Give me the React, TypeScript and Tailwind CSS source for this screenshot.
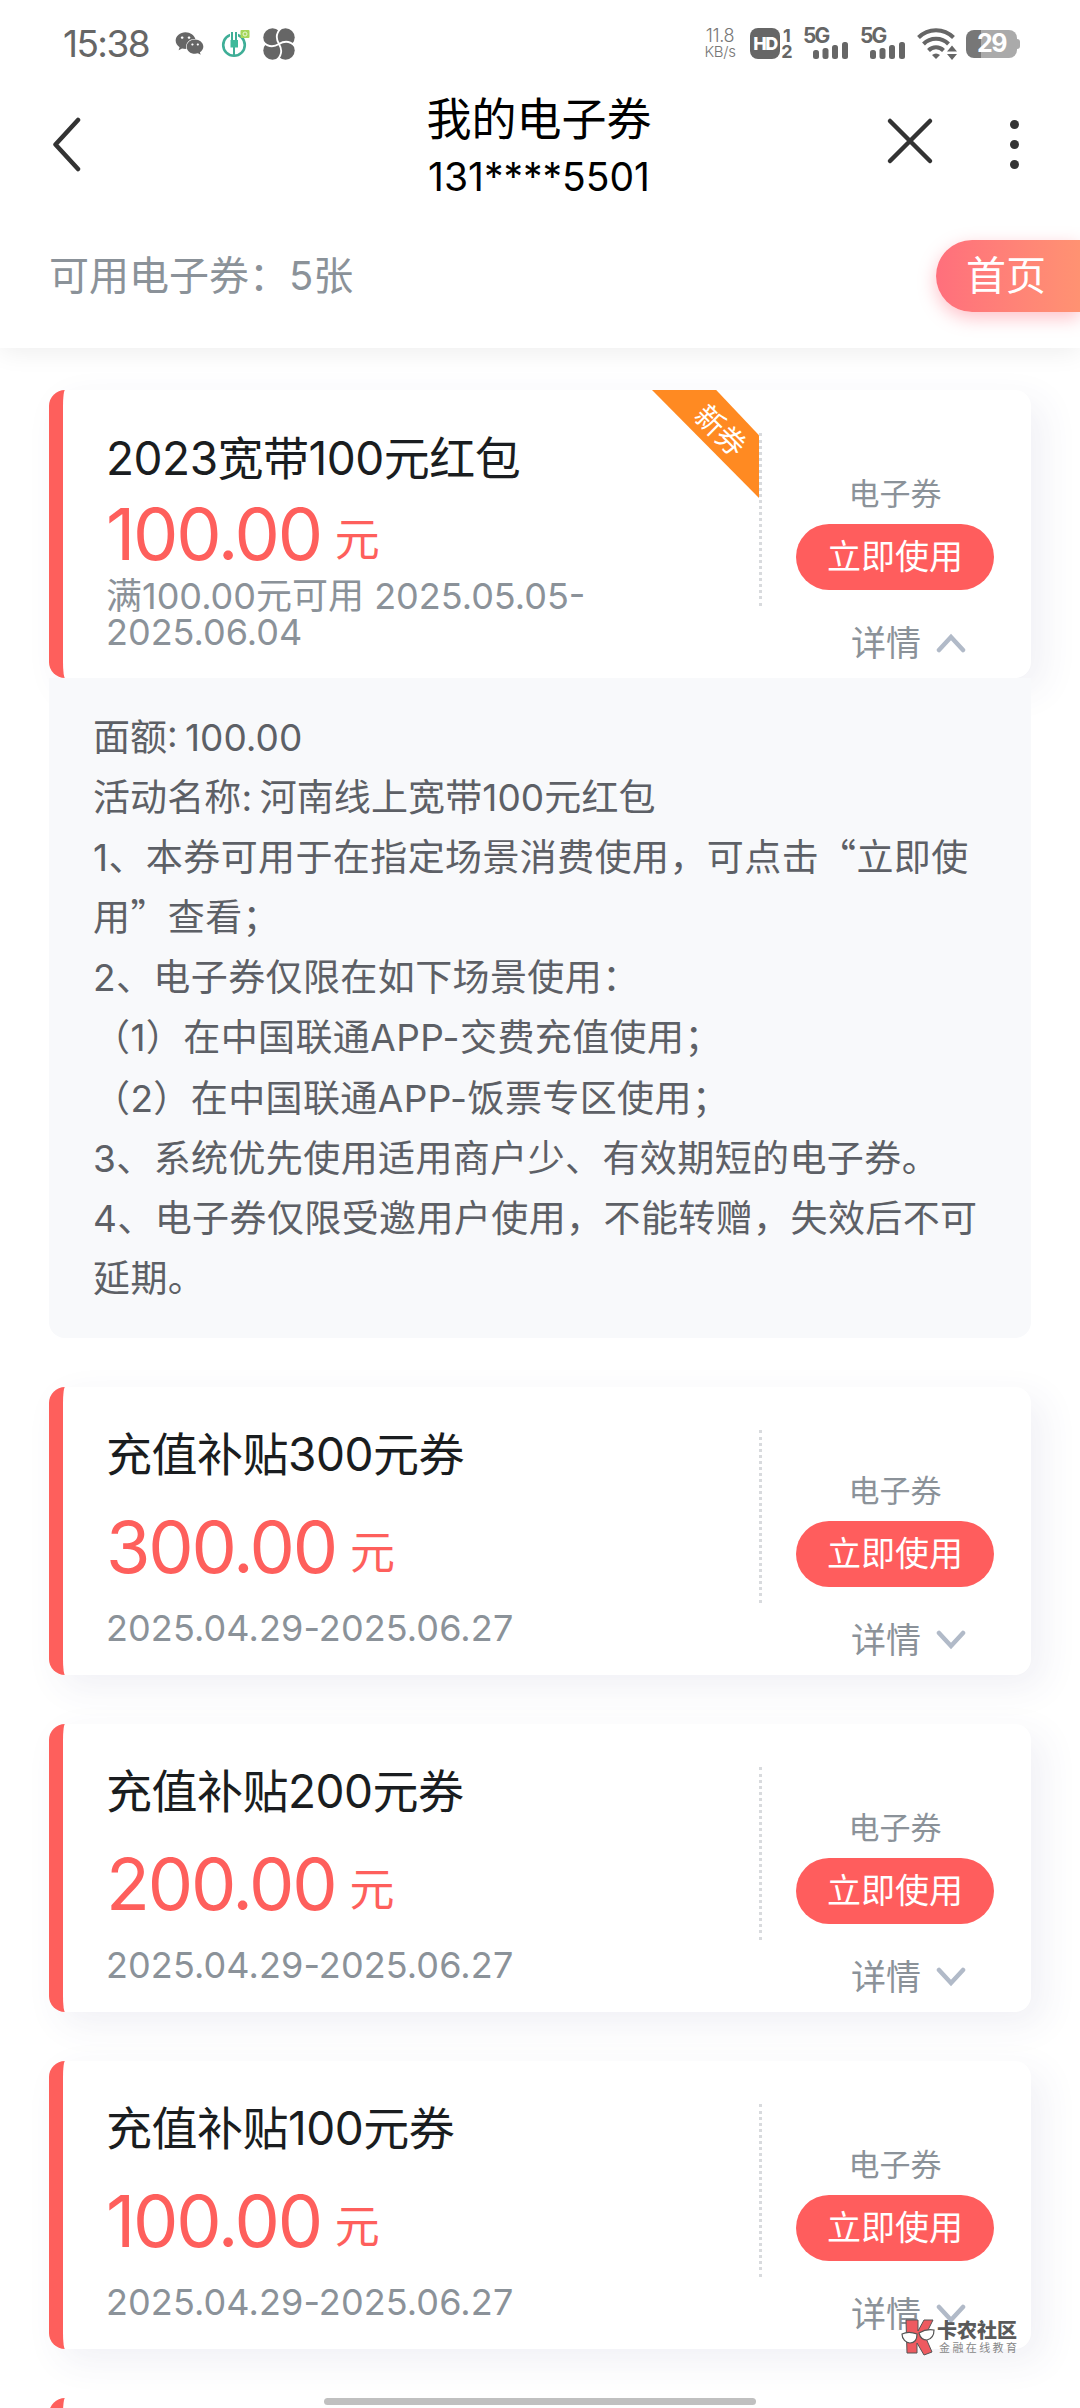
import React, { useState } from 'react';
import { FaWeixin } from 'react-icons/fa';

type Coupon = {
  id: number;
  title: string;
  amount: string;
  desc: string[];
  isNew?: boolean;
};

const coupons: Coupon[] = [
  { id: 1, title: '2023宽带100元红包', amount: '100.00', desc: ['满100.00元可用 2025.05.05-', '2025.06.04'], isNew: true },
  { id: 2, title: '充值补贴300元券', amount: '300.00', desc: ['2025.04.29-2025.06.27'] },
  { id: 3, title: '充值补贴200元券', amount: '200.00', desc: ['2025.04.29-2025.06.27'] },
  { id: 4, title: '充值补贴100元券', amount: '100.00', desc: ['2025.04.29-2025.06.27'] },
];

const Quote = ({ children }: { children: string }) => (
  <span lang="zh-CN" className="leading-none font-['Noto_Sans_CJK_SC',sans-serif]">{children}</span>
);

const SignalBars = () => (
  <div className="relative w-[46px] h-[32px]">
    <span className="absolute left-[-1px] -top-[1px] text-[21px] leading-[18px] font-bold tracking-[-2px]">5G</span>
    <svg className="absolute left-[9px] top-[14px]" width="36" height="17" viewBox="0 0 36 17" fill="currentColor">
      <rect x="0" y="8" width="6" height="9" rx="2.5" />
      <rect x="9.5" y="6" width="6" height="11" rx="2.5" />
      <rect x="19" y="3" width="6" height="14" rx="2.5" />
      <rect x="29" y="0" width="6" height="17" rx="2.5" />
    </svg>
  </div>
);

const StatusBar = () => (
  <div className="flex items-center h-[87px] pl-[63px] pr-[60px] text-[#666]">
    <span className="w-[112px] text-[37px] leading-none tracking-[-1.600px]">15:38</span>
    <FaWeixin size={29} />
    <svg className="ml-[17px]" width="30" height="30" viewBox="0 0 30 30">
      <circle cx="13" cy="16" r="10.8" fill="none" stroke="#3fae97" strokeWidth="2.6" />
      <path d="M13 2v10" stroke="#fff" strokeWidth="8" />
      <path d="M11 3v9M15 3v9M13 18v9" stroke="#3fae97" strokeWidth="2" fill="none" />
      <path d="M9.5 11h7.5v7.5H9.5z" fill="#3fb99a" />
      <rect x="19.5" y="1" width="9" height="8" rx="1" fill="#a5d65a" />
      <circle cx="24" cy="5" r="2" fill="none" stroke="#e9f8d5" strokeWidth="1" />
    </svg>
    <svg className="ml-[12px]" width="32" height="32" viewBox="0 0 32 32" fill="currentColor">
      <circle cx="9.5" cy="9.5" r="9.2" />
      <circle cx="22.5" cy="9.5" r="9.2" />
      <circle cx="9.5" cy="22.5" r="9.2" />
      <circle cx="22.5" cy="22.5" r="9.2" />
      <path d="M10 10h12v12H10z" />
      <path d="M18 0c-5 5-5 11-2 16M32 18c-5-5-11-5-16-2M14 32c5-5 5-11 2-16M0 14c5 5 11 5 16 2" stroke="#fff" strokeWidth="1.8" fill="none" />
    </svg>

    <div className="ml-auto flex items-center">
      <div className="w-[36px] flex flex-col items-center text-[#777] whitespace-nowrap">
        <div className="text-[18px] leading-[17px] font-light tracking-[-0.300px]">11.8</div>
        <div className="text-[15px] leading-[16px] font-light tracking-[-0.300px]">KB/s</div>
      </div>
      <div className="ml-[12px] w-[30px] h-[31px] rounded-[8px] bg-[#666] text-white text-[18px] font-extrabold tracking-[-1.500px] flex items-center justify-center">HD</div>
      <div className="ml-[1px] w-[12px] text-[18px] leading-[16px] font-bold text-center">
        <div>1</div>
        <div>2</div>
      </div>
      <div className="ml-[11px]"><SignalBars /></div>
      <div className="ml-[11px]"><SignalBars /></div>
      <svg className="ml-[10px]" width="40" height="32" viewBox="0 0 40 32" fill="none" stroke="currentColor" strokeWidth="4">
        <path d="M1.500 9.500a24.500 24.500 0 0 1 35 0" />
        <path d="M6.500 16a17.500 17.500 0 0 1 25 0" />
        <path d="M11.500 22.500a10.500 10.500 0 0 1 15 0" />
        <path d="M15 27a6 6 0 0 1 8 0l-4 4z" fill="currentColor" stroke="none" />
        <path d="M28 24.500l7-9 7 9z" fill="#fff" stroke="none" />
        <path d="M30 23.500l5-6 5 6zM30 26l5 6 5-6z" fill="currentColor" stroke="none" />
      </svg>
      <div className="ml-[9px] flex items-center">
        <div className="w-[51px] h-[28px] rounded-[8px] bg-[linear-gradient(90deg,#777_29%,#aaa_29%)] text-white text-[25px] font-bold leading-none tracking-[-1.500px] flex items-center justify-center">29</div>
        <div className="w-[3px] h-[10px] rounded-r-full bg-[#aaa]" />
      </div>
    </div>
  </div>
);

const NavBar = () => (
  <div className="flex items-center h-[115px] pl-[52px] pr-[61px] text-black">
    <svg width="60" height="56" viewBox="0 0 60 56" fill="none" stroke="#333" strokeWidth="4.500" strokeLinecap="round" strokeLinejoin="round">
      <path d="M26 3L3.500 27.500L26 52" />
    </svg>
    <div className="flex-1 pl-[80px] pt-[4px] flex flex-col items-center">
      <h1 className="text-[45px] leading-[60px]">我的电子券</h1>
      <p className="text-[39px] leading-[54px]">131****5501</p>
    </div>
    <svg className="mb-[7px]" width="48" height="48" viewBox="0 0 48 48" fill="none" stroke="#333" strokeWidth="4.500" strokeLinecap="round">
      <path d="M4 4l40 40M44 4L4 44" />
    </svg>
    <div className="ml-[76px] flex flex-col gap-[11px]">
      <span className="size-[9px] rounded-full bg-[#333]" />
      <span className="size-[9px] rounded-full bg-[#333]" />
      <span className="size-[9px] rounded-full bg-[#333]" />
    </div>
  </div>
);

const CouponCard = ({ coupon, open, onToggle }: { coupon: Coupon; open: boolean; onToggle: () => void }) => {
  const twoLines = coupon.desc.length > 1;
  return (
    <div className="flex h-[288px] rounded-2xl border-l-[14px] border-[#fe5f5c] bg-white shadow-[12px_12px_36px_rgba(70,70,130,0.08)]">
      <div className="relative w-[696px] pl-[43px] overflow-hidden">
        <h2 className={`text-[46px] leading-[60px] text-[#1a1d20] whitespace-nowrap tracking-[-0.500px] ${twoLines ? 'mt-[38px]' : 'mt-[37px]'}`}>{coupon.title}</h2>
        <div className={`flex items-end h-[72px] text-[#fe5f5c] ${twoLines ? 'mt-[10px]' : 'mt-[27px]'}`}>
          <span className="text-[72px] leading-[72px] tracking-[-2.200px]">{coupon.amount}</span>
          <span className="ml-[14px] text-[45px] leading-[60px]">元</span>
        </div>
        <div className={`text-[36px] leading-[36px] text-[#8b9299] whitespace-nowrap ${twoLines ? 'mt-[8px] tracking-[0px]' : 'mt-[27px] tracking-[0.100px]'}`}>
          {coupon.desc.map((line) => (
            <div key={line} className="h-[36px]">{line}</div>
          ))}
        </div>
        {coupon.isNew && (
          <div className="absolute top-0 right-0 w-[107px] h-[108px] bg-[#ff8a22] [clip-path:polygon(0_0,60%_0,100%_42%,100%_100%)]">
            <span className="absolute left-[36px] top-[25px] w-[64px] rotate-45 text-center text-[29px] leading-[32px] text-white whitespace-nowrap">新券</span>
          </div>
        )}
      </div>
      <div className="mt-[43px] h-[173px] border-l-[3px] border-dotted border-[#d8dadd]" />
      <div className="flex-1 flex flex-col items-center pr-[3px]">
        <span className="mt-[84px] text-[31px] leading-[40px] text-[#8b9299]">电子券</span>
        <button className="mt-[10px] w-[198px] h-[66px] rounded-full bg-[#ff5d5d] text-white text-[34px] leading-none">立即使用</button>
        <button onClick={onToggle} className="mt-[33px] ml-[27px] flex items-center text-[35px] leading-[40px] text-[#8b9299]">
          详情
          <svg className="ml-[15px]" width="30" height="20" viewBox="0 0 30 20" fill="none" stroke="#b1bac8" strokeWidth="4.500" strokeLinecap="round">
            {open ? <path d="M3 17L15 4l12 13" /> : <path d="M3 3l12 13L27 3" />}
          </svg>
        </button>
      </div>
    </div>
  );
};

const CouponDetail = () => (
  <div className="relative h-[660px] pt-[30px] pl-[44px] rounded-b-2xl bg-[#f8f9fb] text-[37px] leading-[60px] tracking-[0.400px] text-[#5d6066] whitespace-nowrap [&>p]:h-[60.1px]">
    <p className="tracking-[0px] [word-spacing:-3px]">面额: 100.00</p>
    <p className="tracking-[0.100px] [word-spacing:-3px]">活动名称: 河南线上宽带100元红包</p>
    <p>1、本券可用于在指定场景消费使用，可点击<Quote>“</Quote>立即使</p>
    <p>用<Quote>”</Quote>查看；</p>
    <p>2、电子券仅限在如下场景使用：</p>
    <p>（1）在中国联通APP-交费充值使用；</p>
    <p>（2）在中国联通APP-饭票专区使用；</p>
    <p>3、系统优先使用适用商户少、有效期短的电子券。</p>
    <p>4、电子券仅限受邀用户使用，不能转赠，失效后不可</p>
    <p>延期。</p>
  </div>
);

const Watermark = () => (
  <div className="absolute left-[901px] top-[2319px] flex items-center">
    <svg width="34" height="37" viewBox="0 0 34 37">
      <path d="M5 1h12v11l6-11h9l-8 16 7 16-8 3-7-12v10H6z" fill="#ee5a60" stroke="#555" strokeWidth="1" />
      <path d="M1 15c4-2 10-2 15 0 0 6-3 9-7 9s-8-4-8-9zM18 14c5-3 10-4 15-3 0 6-3 9-7 10-4 0-7-3-8-7z" fill="#fff" stroke="#555" strokeWidth="1.200" />
    </svg>
    <div className="ml-[2px] whitespace-nowrap">
      <div className="text-[20px] leading-[21px] font-black text-[#5a5a5a]">卡农社区</div>
      <div className="ml-[2px] text-[11px] leading-[13px] tracking-[2.400px] text-[#888]">金融在线教育</div>
    </div>
  </div>
);

const App = () => {
  const [openId, setOpenId] = useState<number | null>(1);

  return (
    <div lang="zh-CN" className="relative w-[1080px] h-[2408px] overflow-hidden bg-white font-['Inter','Noto_Sans_CJK_SC',sans-serif]">
      <header className="h-[348px] bg-white shadow-[0_4px_24px_rgba(0,0,0,0.07)]">
        <StatusBar />
        <NavBar />
        <div className="flex items-center justify-between mt-[38px] pl-[49px]">
          <span className="text-[40px] leading-none text-[#8b9299]">可用电子券：5张</span>
          <button className="w-[144px] h-[72px] pr-1 rounded-l-full bg-linear-to-r from-[#ff6f7c] to-[#ff9272] text-white text-[40px] leading-none shadow-[0_6px_18px_rgba(255,100,120,0.4)]">首页</button>
        </div>
      </header>

      <main className="mt-[42px] px-[49px] flex flex-col gap-[49px]">
        {coupons.map((coupon) => (
          <div key={coupon.id}>
            <CouponCard
              coupon={coupon}
              open={openId === coupon.id}
              onToggle={() => setOpenId(openId === coupon.id ? null : coupon.id)}
            />
            {openId === coupon.id && <CouponDetail />}
          </div>
        ))}
        {/* top edge of the next card, cut off by the screen */}
        <div className="h-[288px] rounded-2xl border-l-[14px] border-[#fe5f5c] bg-white" />
      </main>

      <div className="absolute left-[324px] top-[2398px] w-[432px] h-[7px] rounded-full bg-[#c0c0c0]" />
      <Watermark />
    </div>
  );
};

export default App;
